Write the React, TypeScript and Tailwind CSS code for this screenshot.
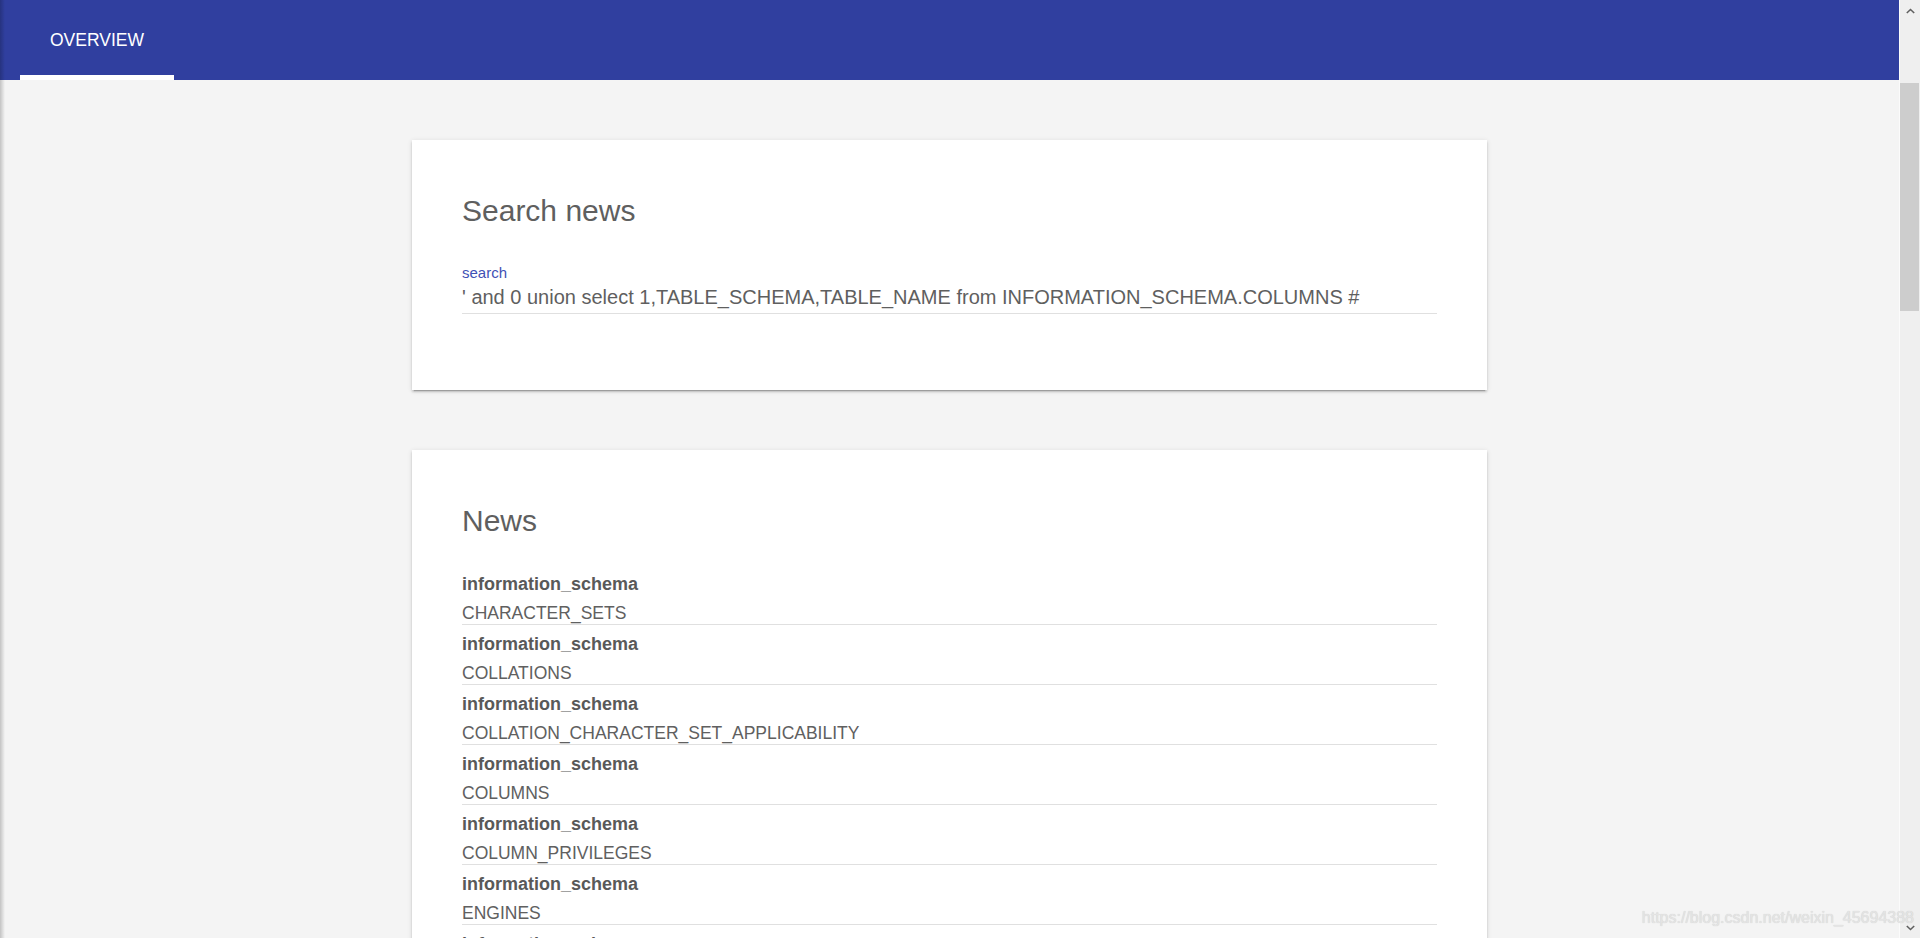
import React from "react";

const tables = [
  "CHARACTER_SETS",
  "COLLATIONS",
  "COLLATION_CHARACTER_SET_APPLICABILITY",
  "COLUMNS",
  "COLUMN_PRIVILEGES",
  "ENGINES",
  "EVENTS",
  "FILES",
  "GLOBAL_STATUS",
];

function Chevron({ up }: { up?: boolean }) {
  return (
    <svg width="9" height="6" viewBox="0 0 9 6" className="block">
      <path
        d={up ? "M0.8 5 L4.5 1.5 L8.2 5" : "M0.8 1 L4.5 4.5 L8.2 1"}
        fill="none"
        stroke="#606060"
        strokeWidth="1.6"
      />
    </svg>
  );
}

export default function App() {
  return (
    <div className="relative flex h-[938px] w-full overflow-hidden bg-[#f4f4f4] font-['Liberation_Sans',Arial,sans-serif]">
      <div className="flex min-w-0 flex-1 flex-col">
        <header className="flex h-[80px] shrink-0 bg-[#303f9f]">
          <div className="ml-[20px] flex h-full w-[154px] items-center justify-center border-b-[5px] border-white pt-[5px] text-[17.5px] uppercase text-white">
            Overview
          </div>
        </header>
        <main className="flex-1 overflow-hidden pt-[60px]">
          <section className="mx-auto w-[1075px] bg-white px-[50px] pb-[76px] pt-[53px] shadow-[0_2px_2px_0_rgba(0,0,0,0.14),0_3px_1px_-2px_rgba(0,0,0,0.2),0_1px_5px_0_rgba(0,0,0,0.12)]">
            <h2 className="text-[30px] font-normal leading-[36px] text-[#5f5f5f]">Search news</h2>
            <label className="mt-[35px] block text-[15px] leading-[18px] text-[#3f51b5]">search</label>
            <div className="mt-[3px] border-b border-[#e0e0e0] pb-[4px]">
              <input
                readOnly
                value="' and 0 union select 1,TABLE_SCHEMA,TABLE_NAME from INFORMATION_SCHEMA.COLUMNS #"
                className="block h-[24px] w-full bg-transparent p-0 text-[20px] leading-[24px] text-[#5f5f5f] outline-none"
              />
            </div>
          </section>
          <section className="mx-auto mt-[60px] w-[1075px] bg-white px-[50px] pb-[40px] pt-[53px] shadow-[0_2px_2px_0_rgba(0,0,0,0.14),0_3px_1px_-2px_rgba(0,0,0,0.2),0_1px_5px_0_rgba(0,0,0,0.12)]">
            <h2 className="text-[30px] font-normal leading-[36px] text-[#5f5f5f]">News</h2>
            <ul className="mt-[26px]">
              {tables.map((t) => (
                <li key={t} className="border-b border-[#e0e0e0] pt-[8px]">
                  <div className="mb-[7px] text-[18px] font-bold leading-[22px] text-[#595959]">information_schema</div>
                  <div className="text-[17.5px] leading-[22px] text-[#606060]">{t}</div>
                </li>
              ))}
            </ul>
          </section>
        </main>
      </div>
      <div className="flex w-[21px] shrink-0 flex-col border-l border-[#fbfbfb] bg-[#efefef]">
        <div className="flex h-[21px] items-center justify-center">
          <Chevron up />
        </div>
        <div className="h-[62px]" />
        <div className="mr-[1px] h-[228px] bg-[#cdcdcd]" />
        <div className="flex-1" />
        <div className="flex h-[21px] items-center justify-center">
          <Chevron />
        </div>
      </div>
      <div className="pointer-events-none absolute bottom-0 left-0 top-0 w-[5px] bg-linear-to-r from-black/20 to-transparent" />
      <div className="pointer-events-none absolute bottom-[11px] right-[6px] text-[16px] leading-[18px] text-[#e4e4e4] [text-shadow:0_0_1px_rgba(0,0,0,0.18)]">
        https://blog.csdn.net/weixin_45694388
      </div>
    </div>
  );
}
